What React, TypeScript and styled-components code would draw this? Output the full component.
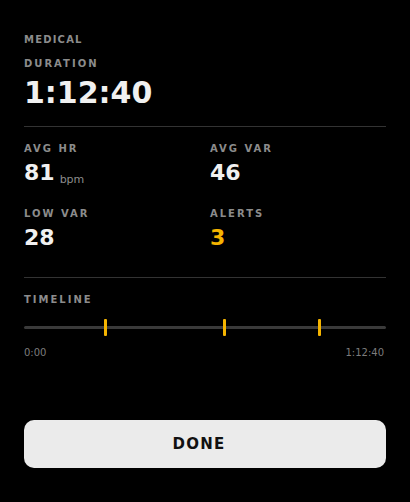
import React from "react";
import styled, { createGlobalStyle } from "styled-components";

const GlobalStyle = createGlobalStyle`
  html, body {
    margin: 0;
    padding: 0;
    background: #000;
  }
  body {
    font-family: "DejaVu Sans", "Liberation Sans", sans-serif;
  }
`;

const markers = [22.4, 55.3, 81.5];

function App() {
  return (
    <>
      <GlobalStyle />
      <Screen>
        <Section>
          <Label $tight>Medical</Label>
          <Label $gap={12}>Duration</Label>
          <BigValue>1:12:40</BigValue>
        </Section>
        <Divider $above={15} $below={16} />
        <StatsGrid>
          <Stat>
            <Label>Avg HR</Label>
            <Value>
              81<Unit>bpm</Unit>
            </Value>
          </Stat>
          <Stat>
            <Label>Avg VAR</Label>
            <Value>46</Value>
          </Stat>
          <Stat>
            <Label>Low VAR</Label>
            <Value>28</Value>
          </Stat>
          <Stat>
            <Label>Alerts</Label>
            <Value $alert>3</Value>
          </Stat>
        </StatsGrid>
        <Divider $above={25} $below={16} />
        <Timeline>
          <Label>Timeline</Label>
          <Track>
            {markers.map((m) => (
              <Marker key={m} style={{ left: `${m}%` }} />
            ))}
          </Track>
          <TimeRow>
            <span>0:00</span>
            <span>1:12:40</span>
          </TimeRow>
        </Timeline>
        <DoneButton>DONE</DoneButton>
      </Screen>
    </>
  );
}

const Screen = styled.div`
  width: 410px;
  height: 502px;
  box-sizing: border-box;
  padding: 34px 24px 0;
  display: flex;
  flex-direction: column;
  color: #f0f0f0;
`;

const Section = styled.div`
  display: flex;
  flex-direction: column;
`;

const Label = styled.div<{ $tight?: boolean; $gap?: number }>`
  font-size: 10px;
  line-height: 12px;
  font-weight: bold;
  letter-spacing: ${(p) => (p.$tight ? "1.2px" : "2px")};
  text-transform: uppercase;
  color: #8c8c8c;
  margin-top: ${(p) => p.$gap ?? 0}px;
`;

const BigValue = styled.div`
  font-size: 30px;
  line-height: 36px;
  font-weight: bold;
  color: #f0f0f0;
  margin-top: 5px;
`;

const Divider = styled.div<{ $above: number; $below: number }>`
  height: 1px;
  background: #333;
  margin: ${(p) => p.$above}px 0 ${(p) => p.$below}px;
`;

const StatsGrid = styled.div`
  display: grid;
  grid-template-columns: 1fr 1fr;
  column-gap: 10px;
  row-gap: 21px;
`;

const Stat = styled.div`
  display: flex;
  flex-direction: column;
`;

const Value = styled.div<{ $alert?: boolean }>`
  height: 28px;
  font-size: 22px;
  line-height: 28px;
  font-weight: bold;
  color: ${(p) => (p.$alert ? "#f5b400" : "#f0f0f0")};
  margin-top: 4px;
`;

const Unit = styled.span`
  font-size: 11px;
  line-height: 1;
  font-weight: normal;
  color: #8c8c8c;
  margin-left: 5px;
  vertical-align: -3px;
`;

const Timeline = styled.div`
  display: flex;
  flex-direction: column;
`;

const Track = styled.div`
  position: relative;
  height: 3px;
  border-radius: 2px;
  background: #3a3a3a;
  margin-top: 20px;
`;

const Marker = styled.div`
  position: absolute;
  top: -7px;
  width: 3px;
  height: 17px;
  margin-left: -1px;
  border-radius: 1px;
  background: #f5b400;
`;

const TimeRow = styled.div`
  display: flex;
  justify-content: space-between;
  margin-top: 18px;
  padding-right: 2px;
  font-size: 10px;
  line-height: 12px;
  color: #7c7c7c;
`;

const DoneButton = styled.button`
  margin-top: 61px;
  height: 48px;
  padding: 0 12px 0 0;
  border: none;
  border-radius: 10px;
  background: #ebebeb;
  color: #111;
  font-family: "DejaVu Sans", sans-serif;
  font-size: 15px;
  font-weight: bold;
  letter-spacing: 1.2px;
`;

export default App;
